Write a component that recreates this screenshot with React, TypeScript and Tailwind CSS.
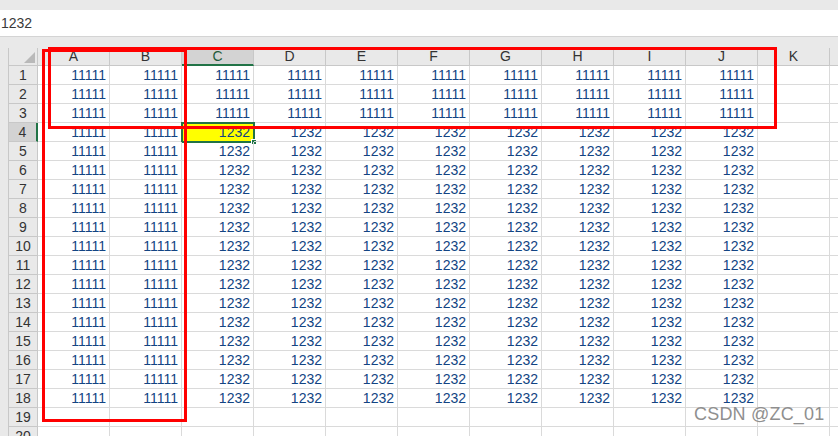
import React from "react";

const columns = ["A", "B", "C", "D", "E", "F", "G", "H", "I", "J", "K"];
const rows = Array.from({ length: 20 }, (_, i) => i + 1);

const cellValue = (row: number, col: number) => {
  if (row > 18 || col > 9) return "";
  if (row <= 3 || col <= 1) return "11111";
  return "1232";
};

const App = () => {
  return (
    <div className="relative w-[838px] h-[436px] overflow-hidden bg-white text-[14px] font-['Liberation_Sans',Arial,sans-serif]">
      {/* top strip */}
      <div className="h-[10px] bg-[#e9e9e9]" />

      {/* formula bar */}
      <div className="h-[27px] bg-white border-b border-[#d4d4d4] flex items-center pl-[1px] text-[#3a3a3a]">
        1232
      </div>

      {/* gap */}
      <div className="h-[11px] bg-[#e9e9e9]" />

      {/* column header row */}
      <div className="flex h-[18px] bg-[#e9e9e9]">
        <div className="w-[9px] shrink-0 border-r border-[#c8c8c8]" />
        <div className="relative w-[29px] shrink-0 border-r border-b border-[#c8c8c8] bg-[#e9e9e9]">
          <div className="absolute right-[2px] bottom-[2px] w-0 h-0 border-l-[11px] border-l-transparent border-b-[11px] border-b-[#b9b9b9]" />
        </div>
        {columns.map((c, i) => (
          <div
            key={c}
            className={`w-[72px] shrink-0 flex items-center justify-center border-r border-[#c8c8c8] ${
              i === 2
                ? "bg-[#d3d3d3] border-b-[2px] border-b-[#217346] text-[#1f5a3c]"
                : "border-b border-b-[#c8c8c8] text-[#333333]"
            }`}
          >
            {c}
          </div>
        ))}
        <div className="flex-1 border-b border-[#c8c8c8]" />
      </div>

      {/* body rows */}
      {rows.map((r) => (
        <div key={r} className="flex h-[19px]">
          <div className="w-[9px] shrink-0 bg-[#e9e9e9] border-r border-[#c8c8c8]" />
          <div
            className={`w-[29px] shrink-0 flex items-center justify-center border-b border-[#c8c8c8] text-[#333333] ${
              r === 4
                ? "bg-[#d3d3d3] border-r-[2px] border-r-[#217346]"
                : "bg-[#e9e9e9] border-r border-r-[#c8c8c8]"
            }`}
          >
            {r}
          </div>
          {columns.map((c, ci) => {
            const selected = r === 4 && ci === 2;
            return (
              <div
                key={c}
                className={`relative w-[72px] shrink-0 flex items-center justify-end pr-[3px] border-r border-b border-[#dadada] text-[#124483] ${
                  selected ? "bg-[#ffff00]" : ""
                }`}
              >
                {cellValue(r, ci)}
                {selected && (
                  <div className="absolute -left-[1px] -top-[1px] w-[74px] h-[21px] border-2 border-[#217346]">
                    <div className="absolute -right-[4px] -bottom-[4px] w-[6px] h-[6px] bg-[#217346] border border-white" />
                  </div>
                )}
              </div>
            );
          })}
          <div className="flex-1 border-b border-[#dadada]" />
        </div>
      ))}

      {/* red highlight boxes */}
      <div className="absolute left-[48px] top-[47px] w-[729px] h-[82px] border-[3px] border-[#ff0000]" />
      <div className="absolute left-[42px] top-[49px] w-[145px] h-[373px] border-[3px] border-[#ff0000]" />

      {/* watermark */}
      <div className="absolute left-[694px] top-[404px] text-[18px] leading-[20px] text-[#8f8f8f] tracking-[0.2px]">
        CSDN @ZC_01
      </div>
    </div>
  );
};

export default App;
